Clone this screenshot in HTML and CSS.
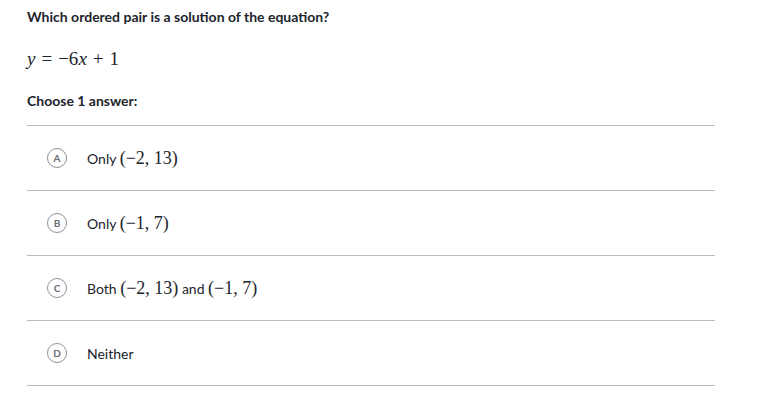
FILE: index.html
```html
<!DOCTYPE html>
<html>
<head>
<meta charset="utf-8">
<link rel="stylesheet" href="styles.css">
</head>
<body>
<div class="page">
  <div class="question">Which ordered pair is a solution of the equation?</div>
  <div class="equation"><span class="mi">y</span><span class="mo">=</span><span class="mn">−6</span><span class="mi">x</span><span class="mo">+</span><span class="mn">1</span></div>
  <div class="prompt">Choose 1 answer:</div>
  <ul class="choices">
    <li class="choice"><span class="letter">A</span><span class="label">Only <span class="math">(−2, 13)</span></span></li>
    <li class="choice"><span class="letter">B</span><span class="label">Only <span class="math">(−1, 7)</span></span></li>
    <li class="choice"><span class="letter">C</span><span class="label">Both <span class="math">(−2, 13)</span> and <span class="math">(−1, 7)</span></span></li>
    <li class="choice"><span class="letter">D</span><span class="label">Neither</span></li>
  </ul>
</div>
</body>
</html>
```
FILE: styles.css
```css
html, body {
  margin: 0;
  padding: 0;
  background: #fff;
}
.page {
  padding: 8px 0 0 27px;
  width: 688px;
  font-family: Lato, "Liberation Sans", sans-serif;
  color: #21242c;
}
.question {
  font-weight: 700;
  font-size: 14px;
  line-height: 18px;
}
.equation {
  margin-top: 21px;
  font-family: "Liberation Serif", "DejaVu Serif", serif;
  font-size: 19px;
  line-height: 24px;
  color: #21242c;
}
.mi {
  font-style: italic;
}
.mo {
  margin: 0 6px;
}
.prompt {
  margin-top: 21px;
  font-weight: 700;
  font-size: 14px;
  line-height: 18px;
}
.choices {
  list-style: none;
  margin: 15px 0 0 0;
  padding: 0;
  border-top: 1px solid #bababe;
}
.choice {
  height: 64px;
  border-bottom: 1px solid #bababe;
  display: flex;
  align-items: center;
  padding-left: 20px;
}
.letter {
  box-sizing: border-box;
  width: 20px;
  height: 20px;
  border: 1.5px solid #8f9297;
  border-radius: 50%;
  display: flex;
  align-items: center;
  justify-content: center;
  font-size: 10px;
  font-weight: 700;
  color: #6b6e73;
  flex: none;
}
.label {
  margin-left: 20px;
  font-size: 14px;
  color: #21242c;
}
.math {
  font-family: "Liberation Serif", "DejaVu Serif", serif;
  font-size: 18px;
}
```
